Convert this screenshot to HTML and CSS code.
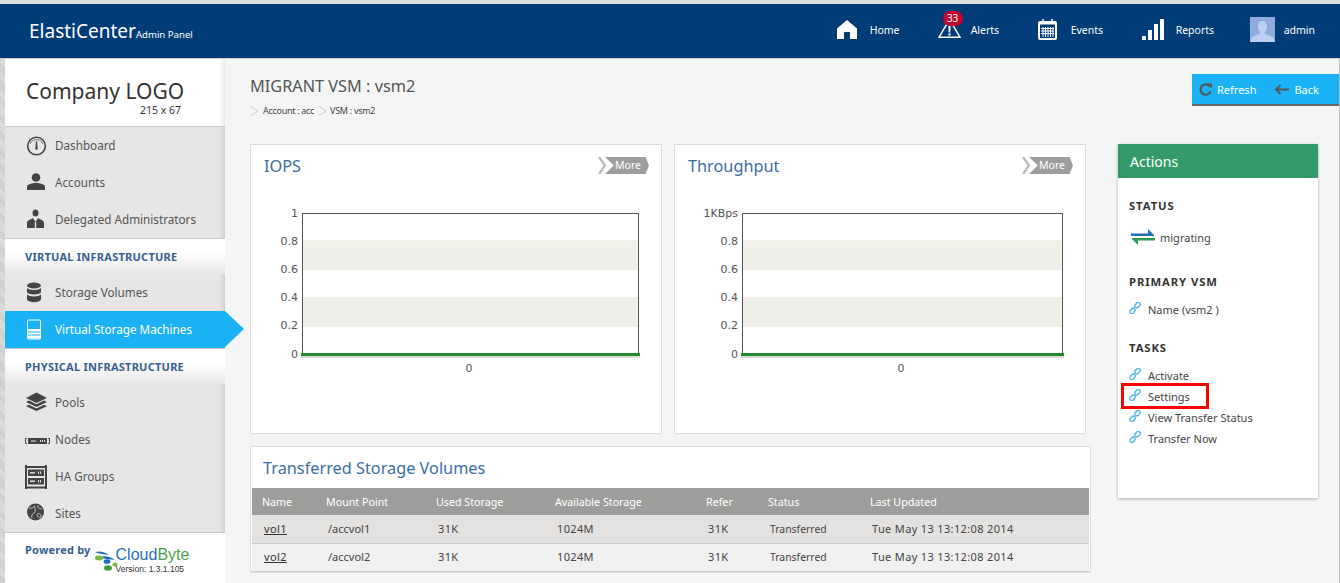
FILE: index.html
```html
<!DOCTYPE html>
<html lang="en">
<head>
    <meta charset="UTF-8">
    <meta name="viewport" content="width=device-width, initial-scale=1.0">
    <title>ElastiCenter Admin Panel</title>
    <link rel="stylesheet" href="styles.css">
</head>
<body>
    <header class="topbar">
        <div class="brand">ElastiCenter<small>Admin Panel</small></div>
        <nav class="topnav">
            <a class="toplink toplink-home">
                <svg width="20" height="19" viewBox="0 0 20 19"><path fill="#fff" d="M10 0 L20 8.5 V19 H13 V12 H7 V19 H0 V8.5 Z"/></svg>
                <span>Home</span>
            </a>
            <a class="toplink toplink-alerts">
                <svg width="23" height="20" viewBox="0 0 23 20"><path fill="none" stroke="#fff" stroke-width="1.5" d="M11.5 1.5 L22 19.2 H1 Z"/><path fill="#fff" d="M10.3 7 H12.7 L12.3 14.5 H10.7 Z M10.4 15.5 H12.6 V17.5 H10.4 Z"/></svg>
                <span>Alerts</span>
                <b class="badge">33</b>
            </a>
            <a class="toplink toplink-events">
                <svg width="19" height="21" viewBox="0 0 19 21"><rect y="2" width="19" height="19" rx="2" fill="#fff"/><path stroke="#fff" stroke-width="1.4" d="M5 0 V4 M14 0 V4"/><rect x="2" y="5.5" width="15" height="13.5" fill="#003c77"/><path stroke="#fff" stroke-width="1" d="M5 8 V18 M7.5 8 V18 M10 8 V18 M12.5 8 V18 M15 8 V18 M3 9.5 H16 M3 12 H16 M3 14.5 H16"/></svg>
                <span>Events</span>
            </a>
            <a class="toplink toplink-reports">
                <svg width="22" height="21" viewBox="0 0 22 21"><path fill="#fff" d="M0 17 H4 V21 H0 Z M6 11 H10 V21 H6 Z M12 5 H16 V21 H12 Z M18 0 H22 V21 H18 Z"/></svg>
                <span>Reports</span>
            </a>
            <a class="toplink toplink-admin">
                <svg width="25" height="25" viewBox="0 0 25 25"><rect width="25" height="25" fill="#8fabdc"/><path fill="#bccfee" d="M12.5 4 C15.5 4 17 6.5 17 9.5 C17 12 16 14 14.8 15 V16.5 C17 18 22 19 23.5 21 L25 25 H0 L1.5 21 C3 19 8 18 10.2 16.5 V15 C9 14 8 12 8 9.5 C8 6.5 9.5 4 12.5 4 Z"/></svg>
                <span>admin</span>
            </a>
        </nav>
    </header>

    <div class="layout">
        <aside class="sidebar">
            <div class="logo">
                <div class="logo-name">Company LOGO</div>
                <div class="logo-size">215 x 67</div>
            </div>

            <ul class="menu">
                <li>
                    <svg class="menu-icon" viewBox="0 0 30 26"><circle cx="11.5" cy="13" r="8.8" fill="none" stroke="#444" stroke-width="1.6"/><path fill="none" stroke="#777" d="M5 11 A7 7 0 0 1 18 11"/><path fill="#444" d="M11 8 H12 L12.6 15 A1.2 1.2 0 1 1 10.4 15 Z"/></svg>
                    <span>Dashboard</span>
                </li>
                <li>
                    <svg class="menu-icon" viewBox="0 0 30 26"><circle cx="11" cy="7.5" r="4.3" fill="#444"/><path fill="#444" d="M2 20 V17 C2 14 7 13 11 13 C15 13 20 14 20 17 V20 Z"/></svg>
                    <span>Accounts</span>
                </li>
                <li>
                    <svg class="menu-icon" viewBox="0 0 30 26"><ellipse cx="10.5" cy="6" rx="3" ry="3.6" fill="#444"/><path fill="#444" d="M2 21 V16 C2 13 6 12.5 8 11 L10.5 15 L13 11 C15 12.5 19 13 19 16 V21 Z"/><path fill="#e6e6e6" d="M9.8 15 H11.2 V21 H9.8 Z"/></svg>
                    <span>Delegated Administrators</span>
                </li>
            </ul>

            <h3 class="menu-heading">VIRTUAL INFRASTRUCTURE</h3>
            <ul class="menu">
                <li>
                    <svg class="menu-icon" viewBox="0 0 30 26"><ellipse cx="9" cy="5.5" rx="7" ry="3" fill="#444"/><path fill="#444" d="M2 8 C4 10.5 14 10.5 16 8 V12.5 C14 15 4 15 2 12.5 Z M2 14.5 C4 17 14 17 16 14.5 V19.5 C14 23 4 23 2 19.5 Z"/></svg>
                    <span>Storage Volumes</span>
                </li>
                <li class="active">
                    <svg class="menu-icon" viewBox="0 0 30 26"><rect x="2.5" y="3" width="13" height="19" rx="1" fill="none" stroke="#fff"/><path fill="#fff" d="M3 12 H15 V14.5 H3 Z M3 15.5 H15 V17.5 H3 Z M3 18.5 H15 V21.5 H3 Z"/></svg>
                    <span>Virtual Storage Machines</span>
                </li>
            </ul>

            <h3 class="menu-heading">PHYSICAL INFRASTRUCTURE</h3>
            <ul class="menu">
                <li>
                    <svg class="menu-icon" viewBox="0 0 30 26"><path fill="#444" d="M11.5 2.5 L22 8 L11.5 13 L1 8 Z M4 10.5 L11.5 14.3 L19 10.5 L22 12 L11.5 17 L1 12 Z M4 14.8 L11.5 18.4 L19 14.8 L22 16.3 L11.5 21 L1 16.3 Z"/></svg>
                    <span>Pools</span>
                </li>
                <li>
                    <svg class="menu-icon" viewBox="0 0 30 26"><path fill="none" stroke="#444" d="M2 11.5 H.5 V16.5 H2 M23 11.5 H24.5 V16.5 H23"/><rect x="3" y="11" width="19" height="6" fill="#444"/><path fill="#ddd" d="M6 13.5 H11 V14.5 H6 Z M15 13 H16 V15 H15 Z M17 13 H18 V15 H17 Z M19 13 H20 V15 H19 Z"/></svg>
                    <span>Nodes</span>
                </li>
                <li>
                    <svg class="menu-icon" viewBox="0 0 30 26"><path fill="#444" d="M0 1 H2 V25 H0 Z M20 1 H22 V25 H20 Z M2 2 H20 V4 H2 Z M2 22.5 H20 V24.5 H2 Z M3 5.5 H19 V12 H3 Z M3 14 H19 V20.5 H3 Z"/><path fill="#ddd" d="M5 8 H10 V9.5 H5 Z M13 7.5 H14 V10 H13 Z M15 7.5 H16 V10 H15 Z M5 16.5 H10 V18 H5 Z M13 16 H14 V18.5 H13 Z M15 16 H16 V18.5 H15 Z"/></svg>
                    <span>HA Groups</span>
                </li>
                <li>
                    <svg class="menu-icon" viewBox="0 0 30 26"><circle cx="10.5" cy="11" r="8.5" fill="#444"/><path fill="none" stroke="#ccc" stroke-width=".9" d="M4 7 C7 8 8 6 10 5 C9 8 12 9 9 12 C7 13 6 15 7 17 M13 4 C12 7 15 8 17 8 M12 13 C14 12 17 13 16 16 C14 17 12 16 12 13 Z"/></svg>
                    <span>Sites</span>
                </li>
            </ul>

            <div class="powered">
                <span class="powered-by">Powered by</span>
                <div class="cloudbyte">
                    <svg width="24" height="20" viewBox="0 0 24 20"><path fill="#1f6fb5" d="M1 1 C6 -.5 11 1 15 4 C10 3 5 3 1 1 Z M7 6 C11 4 17 6 21 9 C16 8 11 9 7 6 Z"/><ellipse cx="5" cy="7" rx="4" ry="2.4" fill="#7ab648"/><ellipse cx="13" cy="10.5" rx="3.4" ry="2.3" fill="#1f6fb5"/><ellipse cx="14" cy="17" rx="4" ry="2.8" fill="#3f9a3c"/><ellipse cx="21" cy="13.5" rx="2.6" ry="2" fill="#7ab648"/></svg>
                    <div class="cloudbyte-text">
                        <div class="cloudbyte-name">Cloud<em>Byte</em></div>
                        <div class="cloudbyte-version">Version: 1.3.1.105</div>
                    </div>
                </div>
            </div>
        </aside>

        <main class="main">
            <div class="title-row">
                <div>
                    <h1>MIGRANT VSM : vsm2</h1>
                    <div class="crumbs">
                        <svg width="9" height="10" viewBox="0 0 9 10"><path fill="none" stroke="#ccc" d="M1 .5 L8 5 L1 9.5"/></svg>
                        <span>Account : acc</span>
                        <svg width="9" height="10" viewBox="0 0 9 10"><path fill="none" stroke="#ccc" d="M1 .5 L8 5 L1 9.5"/></svg>
                        <span>VSM : vsm2</span>
                    </div>
                </div>
                <div class="toolbar">
                    <a class="tool">
                        <svg width="13" height="13" viewBox="0 0 13 13"><path fill="none" stroke="#555" stroke-width="2.2" d="M11 3.5 A5.2 5.2 0 1 0 11.6 8.5"/><path fill="#555" d="M8 .5 H13 V5.5 Z"/></svg>
                        Refresh
                    </a>
                    <a class="tool">
                        <svg width="15" height="11" viewBox="0 0 15 11"><path fill="none" stroke="#555" stroke-width="1.8" d="M15 5.5 H2 M6.5 1 L2 5.5 L6.5 10"/></svg>
                        Back
                    </a>
                </div>
            </div>

            <div class="content">
                <div class="content-left">
                    <div class="charts">
                        <section class="card chart-card">
                            <div class="card-head">
                                <h2>IOPS</h2>
                                <a class="more">
                                    <svg width="9" height="17" viewBox="0 0 9 17"><path fill="none" stroke="#bbb" stroke-width="2.4" d="M1 0 L7 8.5 L1 17"/></svg>
                                    <span>More</span>
                                </a>
                            </div>
                            <svg class="chart" width="410" height="190" viewBox="0 0 410 190">
                                <rect x="51" y="36" width="336" height="29" fill="#f0f0ea"/>
                                <rect x="51" y="93" width="336" height="29" fill="#f0f0ea"/>
                                <path stroke="#fbeee3" d="M51 36.5 H387 M51 65.5 H387 M51 93.5 H387 M51 122.5 H387"/>
                                <rect x="51.5" y="9.5" width="336" height="141" fill="none" stroke="#545454"/>
                                <rect x="50" y="151" width="339" height="3" fill="#000" opacity=".15"/>
                                <rect x="50" y="149" width="339" height="3" fill="#1e8c28"/>
                                <text class="tick" x="47" y="13" text-anchor="end">1</text>
                                <text class="tick" x="47" y="41" text-anchor="end">0.8</text>
                                <text class="tick" x="47" y="69" text-anchor="end">0.6</text>
                                <text class="tick" x="47" y="97" text-anchor="end">0.4</text>
                                <text class="tick" x="47" y="125" text-anchor="end">0.2</text>
                                <text class="tick" x="47" y="154" text-anchor="end">0</text>
                                <text class="tick" x="218" y="168" text-anchor="middle">0</text>
                            </svg>
                        </section>
                        <section class="card chart-card">
                            <div class="card-head">
                                <h2>Throughput</h2>
                                <a class="more">
                                    <svg width="9" height="17" viewBox="0 0 9 17"><path fill="none" stroke="#bbb" stroke-width="2.4" d="M1 0 L7 8.5 L1 17"/></svg>
                                    <span>More</span>
                                </a>
                            </div>
                            <svg class="chart" width="410" height="190" viewBox="0 0 410 190">
                                <rect x="67" y="36" width="320" height="29" fill="#f0f0ea"/>
                                <rect x="67" y="93" width="320" height="29" fill="#f0f0ea"/>
                                <path stroke="#fbeee3" d="M67 36.5 H387 M67 65.5 H387 M67 93.5 H387 M67 122.5 H387"/>
                                <rect x="67.5" y="9.5" width="320" height="141" fill="none" stroke="#545454"/>
                                <rect x="66" y="151" width="323" height="3" fill="#000" opacity=".15"/>
                                <rect x="66" y="149" width="323" height="3" fill="#1e8c28"/>
                                <text class="tick" x="63" y="13" text-anchor="end">1KBps</text>
                                <text class="tick" x="63" y="41" text-anchor="end">0.8</text>
                                <text class="tick" x="63" y="69" text-anchor="end">0.6</text>
                                <text class="tick" x="63" y="97" text-anchor="end">0.4</text>
                                <text class="tick" x="63" y="125" text-anchor="end">0.2</text>
                                <text class="tick" x="63" y="154" text-anchor="end">0</text>
                                <text class="tick" x="226" y="168" text-anchor="middle">0</text>
                            </svg>
                        </section>
                    </div>

                    <section class="card table-card">
                        <h2>Transferred Storage Volumes</h2>
                        <table>
                            <thead>
                                <tr>
                                    <th class="col-name">Name</th>
                                    <th class="col-mount">Mount Point</th>
                                    <th class="col-used">Used Storage</th>
                                    <th class="col-avail">Available Storage</th>
                                    <th class="col-refer">Refer</th>
                                    <th class="col-status">Status</th>
                                    <th>Last Updated</th>
                                </tr>
                            </thead>
                            <tbody>
                                <tr>
                                    <td class="num"><a href="#">vol1</a></td>
                                    <td>/accvol1</td>
                                    <td class="num">31K</td>
                                    <td class="num">1024M</td>
                                    <td class="num">31K</td>
                                    <td class="state">Transferred</td>
                                    <td class="num">Tue May 13 13:12:08 2014</td>
                                </tr>
                                <tr>
                                    <td class="num"><a href="#">vol2</a></td>
                                    <td>/accvol2</td>
                                    <td class="num">31K</td>
                                    <td class="num">1024M</td>
                                    <td class="num">31K</td>
                                    <td class="state">Transferred</td>
                                    <td class="num">Tue May 13 13:12:08 2014</td>
                                </tr>
                            </tbody>
                        </table>
                    </section>
                </div>

                <aside class="actions">
                    <div class="actions-head">Actions</div>
                    <div class="actions-body">
                        <h4>STATUS</h4>
                        <div class="status">
                            <svg width="24" height="18" viewBox="0 0 24 18"><path fill="#1f6fb5" d="M0 5.5 H17 V1 L23 7 V8 H0 Z"/><path fill="#2c9c55" d="M24 10 H1 V11 L7 17 V12.5 H24 Z"/></svg>
                            <span>migrating</span>
                        </div>

                        <h4>PRIMARY VSM</h4>
                        <ul class="links links-primary">
                            <li><svg class="link-icon" viewBox="0 0 12 12"><use href="#chain"/></svg>Name (vsm2 )</li>
                        </ul>

                        <h4>TASKS</h4>
                        <ul class="links">
                            <li><svg class="link-icon" viewBox="0 0 12 12"><use href="#chain"/></svg>Activate</li>
                            <li class="marked"><svg class="link-icon" viewBox="0 0 12 12"><use href="#chain"/></svg>Settings</li>
                            <li><svg class="link-icon" viewBox="0 0 12 12"><use href="#chain"/></svg>View Transfer Status</li>
                            <li><svg class="link-icon" viewBox="0 0 12 12"><use href="#chain"/></svg>Transfer Now</li>
                        </ul>
                    </div>
                </aside>
            </div>
        </main>
    </div>

    <svg class="defs" width="0" height="0">
        <symbol id="chain" viewBox="0 0 12 12">
            <g fill="none" stroke="#4db5ee" stroke-width="1.3">
                <rect x="6.5" y=".2" width="4" height="6" rx="2" transform="rotate(45 8.5 3.2)"/>
                <rect x="1.5" y="5.8" width="4" height="6" rx="2" transform="rotate(45 3.5 8.8)"/>
            </g>
        </symbol>
    </svg>
</body>
</html>
```

FILE: styles.css
```css
* {
    box-sizing: border-box;
}

html,
body {
    height: 100%;
}

body {
    margin: 0;
    padding-top: 4px;
    display: flex;
    flex-direction: column;
    overflow: hidden;
    background-color: #dcdcdc;
    font-family: "Noto Sans", Arial, sans-serif;
    font-size: 12px;
    color: #444;
}

ul {
    margin: 0;
    padding: 0;
    list-style: none;
}

.defs {
    position: absolute;
}

/* top bar */
.topbar {
    flex: none;
    height: 55px;
    display: flex;
    align-items: center;
    justify-content: space-between;
    padding: 0 25px 0 29px;
    background-color: #003c77;
    border-bottom: 1px solid #ccc;
    color: #fff;
}

.brand {
    font-size: 19px;
    white-space: nowrap;
}

.brand small {
    font-size: 9.6px;
}

.topnav {
    display: flex;
    align-items: center;
    margin-bottom: 4px;
}

.toplink {
    position: relative;
    display: flex;
    align-items: center;
    font-size: 10.5px;
    white-space: nowrap;
}

.toplink span {
    padding-top: 1px;
}

.toplink-home {
    width: 101px;
}

.toplink-alerts {
    width: 100px;
}

.toplink-events {
    width: 104px;
}

.toplink-reports {
    width: 108px;
}

.toplink-home svg {
    margin-right: 13px;
}

.toplink-alerts svg {
    margin: 0 10px 2px 0;
}

.toplink-events svg {
    margin-right: 14px;
}

.toplink-reports svg {
    margin-right: 12px;
}

.toplink-admin svg {
    margin-right: 9px;
}

.badge {
    position: absolute;
    left: 5px;
    top: -7px;
    width: 20px;
    height: 15px;
    border-radius: 7px;
    background-color: #c0062f;
    font-size: 10px;
    font-weight: normal;
    line-height: 15px;
    text-align: center;
}

/* sidebar */
.layout {
    flex: 1;
    display: flex;
    min-height: 0;
    padding-left: 5px;
    background: repeating-linear-gradient(45deg, #c9c9c9 0, #c9c9c9 1px, #e2e2e2 1px, #e2e2e2 2px);
}

.sidebar {
    flex: none;
    width: 220px;
    display: flex;
    flex-direction: column;
    background-color: #e6e6e6;
}

.logo {
    height: 68px;
    padding: 18px 0 0 21px;
    background-color: #fff;
    border-bottom: 1px solid #ccc;
    box-shadow: inset -7px 0 7px -7px rgba(0, 0, 0, 0.2);
}

.logo-name {
    font-size: 21px;
    line-height: 28px;
    color: #333;
}

.logo-size {
    margin: -1px 0 0 114px;
    font-size: 10.5px;
    line-height: 12px;
    color: #333;
}

.menu li {
    position: relative;
    height: 37px;
    display: flex;
    align-items: center;
    padding-left: 20px;
    font-size: 11.7px;
    color: #555;
    box-shadow: inset -7px 0 7px -7px rgba(0, 0, 0, 0.2);
}

.menu li span {
    padding-bottom: 2px;
}

.menu-icon {
    flex: none;
    width: 30px;
    height: 26px;
}

.menu li.active {
    background-color: #1ab2f5;
    color: #fff;
    box-shadow: none;
}

.menu li.active::after {
    content: "";
    position: absolute;
    left: 100%;
    top: 0;
    border-style: solid;
    border-width: 18.5px 0 18.5px 19px;
    border-color: transparent transparent transparent #1ab2f5;
}

.menu-heading {
    height: 36px;
    margin: 0;
    padding: 0 0 0 20px;
    border-top: 1px solid #ccc;
    background: linear-gradient(#fff 40%, #e6e6e6);
    font-size: 11px;
    line-height: 35px;
    letter-spacing: 0.25px;
    color: #34608f;
}

.powered {
    flex: 1;
    display: flex;
    padding: 9px 0 0 20px;
    border-top: 1px solid #ccc;
    background-color: #fff;
}

.powered-by {
    font-size: 11px;
    font-weight: bold;
    letter-spacing: 0.2px;
    color: #34608f;
}

.cloudbyte {
    display: flex;
    margin: 9px 0 0 3px;
}

.cloudbyte-text {
    margin: -5px 0 0 -2px;
    font-family: "Liberation Sans", Arial, sans-serif;
}

.cloudbyte-name {
    font-size: 16px;
    line-height: 18px;
    color: #2a6fb0;
}

.cloudbyte-name em {
    font-style: normal;
    color: #4aa24a;
}

.cloudbyte-version {
    font-size: 8.5px;
    line-height: 10px;
    color: #333;
}

/* main area */
.main {
    flex: 1;
    min-width: 0;
    padding-left: 25px;
    background-color: #f4f6f5;
    border-right: 1px solid #bbb;
}

.title-row {
    display: flex;
    justify-content: space-between;
    height: 85px;
    padding-top: 15px;
}

h1 {
    margin: 0;
    font-size: 16.3px;
    font-weight: normal;
    line-height: 24px;
    color: #555;
}

.crumbs {
    display: flex;
    align-items: center;
    gap: 4px;
    margin-top: 6px;
    font-size: 9px;
    letter-spacing: -0.3px;
    color: #444;
}

.crumbs span + svg {
    margin-right: -1px;
}

.toolbar {
    width: 147px;
    height: 32px;
    display: flex;
    align-items: center;
    gap: 18px;
    padding-left: 7px;
    background-color: #1ab2f5;
    border-bottom: 2px solid #666;
    color: #fff;
    font-size: 11px;
}

.tool {
    display: flex;
    align-items: center;
    gap: 5px;
}

.content {
    display: flex;
    gap: 27px;
}

.content-left {
    width: 841px;
}

.charts {
    display: flex;
    gap: 12px;
}

.card {
    background-color: #fff;
    border: 1px solid #ddd;
}

.chart-card {
    width: 412px;
    height: 290px;
}

.card-head {
    display: flex;
    justify-content: space-between;
    align-items: flex-start;
    height: 59px;
    padding: 10px 12px 0 13px;
}

h2 {
    margin: 0;
    font-size: 16.3px;
    font-weight: normal;
    line-height: 22px;
    color: #3a6ea5;
}

.more {
    display: flex;
    margin-top: 2px;
}

.more span {
    width: 44px;
    height: 17px;
    margin-left: -2px;
    padding-left: 10px;
    background-color: #9d9d9d;
    clip-path: polygon(0 0, 92% 0, 100% 50%, 92% 100%, 0 100%, 20% 50%);
    color: #fff;
    font-size: 10.5px;
    line-height: 16px;
}

.chart {
    display: block;
}

.tick {
    font-family: "DejaVu Sans", sans-serif;
    font-size: 11px;
    fill: #545454;
}

.table-card {
    height: 127px;
    margin-top: 12px;
    padding: 0 1px;
    border-bottom-width: 2px;
}

.table-card h2 {
    padding: 10px 0 0 11px;
    height: 41px;
}

table {
    width: 100%;
    border-collapse: collapse;
    table-layout: fixed;
}

th {
    height: 27px;
    padding: 0 0 0 10px;
    background-color: #9d9d9b;
    color: #fff;
    font-size: 10.7px;
    font-weight: normal;
    text-align: left;
}

td {
    height: 28px;
    padding: 0 0 1px 12px;
    border-bottom: 1px solid #ccc;
    background-color: #f0f0f0;
    font-size: 11px;
    color: #444;
}

td.num {
    letter-spacing: 0.35px;
}

td.state {
    padding-bottom: 0;
    font-size: 10.4px;
}

tbody tr:first-child td {
    background-color: #e3e2e0;
}

td a {
    color: #333;
}

.col-name {
    width: 64px;
}

.col-mount {
    width: 110px;
}

.col-used {
    width: 119px;
}

.col-avail {
    width: 151px;
}

.col-refer {
    width: 62px;
}

.col-status {
    width: 102px;
}

/* actions panel */
.actions {
    width: 200px;
    height: 354px;
    background-color: #fff;
    box-shadow: 0 1px 3px rgba(0, 0, 0, 0.3);
}

.actions-head {
    height: 34px;
    padding-left: 12px;
    background-color: #349a67;
    color: #fff;
    font-size: 14px;
    line-height: 35px;
}

.actions-body {
    padding: 21px 0 0 11px;
}

h4 {
    margin: 0;
    font-size: 11.3px;
    line-height: 14px;
    letter-spacing: 0.9px;
    color: #333;
}

.status {
    display: flex;
    align-items: center;
    gap: 5px;
    height: 24px;
    margin: 12px 0 26px 2px;
    font-size: 11px;
}

.links {
    margin-top: 10px;
}

.links-primary {
    margin-bottom: 21px;
}

.links li {
    position: relative;
    height: 21px;
    display: flex;
    align-items: center;
    font-size: 11px;
}

.link-icon {
    flex: none;
    width: 12px;
    height: 12px;
    margin-right: 7px;
    position: relative;
    top: -2px;
}

.marked::after {
    content: "";
    box-sizing: border-box;
    position: absolute;
    left: -8px;
    top: -3px;
    width: 88px;
    height: 26px;
    border: 3px solid #f00;
}
```
